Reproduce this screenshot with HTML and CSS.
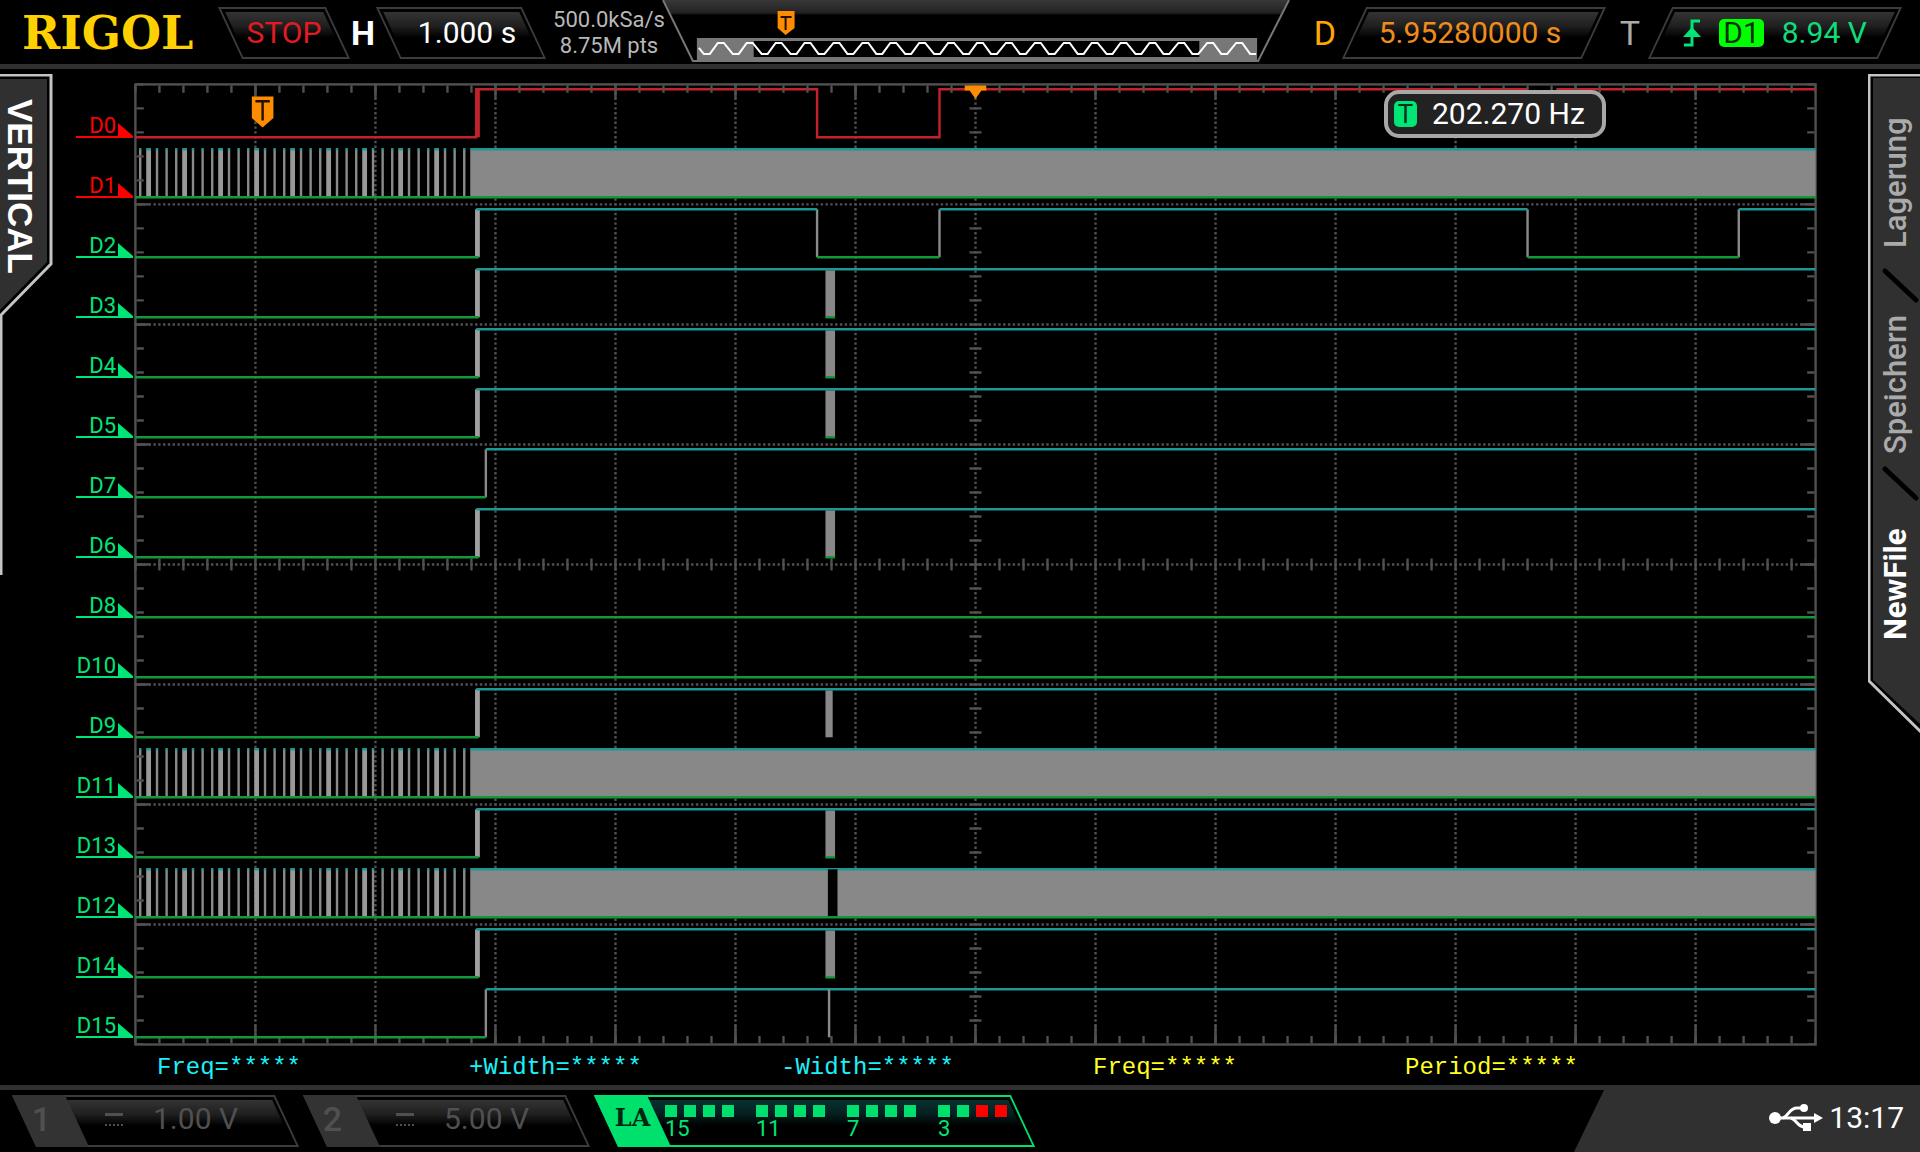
FILE: index.html
```html
<!DOCTYPE html>
<html lang="en">
<head>
<meta charset="utf-8">
<title>RIGOL Logic Analyzer</title>
<link rel="stylesheet" href="styles.css">
</head>
<body>
<header class="topbar">
  <div class="cluster">
    <div class="logo">RIGOL</div>
    <div class="chip chip-run">STOP</div>
    <div class="letter letter-h">H</div>
    <div class="chip chip-time">1.000 s</div>
    <div class="sampling"><span>500.0kSa/s</span><span>8.75M pts</span></div>
  </div>
  <svg class="memory" viewBox="0 0 634 64" aria-hidden="true">
    <defs>
      <linearGradient id="fade" x1="0" y1="0" x2="0" y2="1"><stop offset="0" stop-color="#383838"/><stop offset="0.85" stop-color="#222"/><stop offset="1" stop-color="#000"/></linearGradient>
    </defs>
    <path d="M3 0H631L624 15H10Z" fill="url(#fade)"/>
    <path d="M3 0L33 61H600L631 0" fill="none" stroke="#777" stroke-width="2"/>
    <path d="M37 38H599V61H37Z" fill="#777"/>
    <path d="M94 41H541V57H94Z" fill="#000"/>
    <path id="wave" fill="none" stroke="#fff" stroke-width="2"/>
    <path d="M118 11H135V28L126 35L118 28Z" fill="#ff8c00"/>
    <path d="M121 17H132M126 17V30" stroke="#201000" stroke-width="2"/>
  </svg>
  <div class="cluster">
    <div class="letter letter-d">D</div>
    <div class="chip chip-delay lean-left">5.95280000 s</div>
    <div class="letter letter-t">T</div>
    <div class="chip chip-trigger lean-left">
      <svg width="18" height="28" viewBox="0 0 18 28" aria-hidden="true"><path d="M1 26H9V2H17" fill="none" stroke="#00e676" stroke-width="3"/><path d="M9 8L18 18H0Z" fill="#00e676"/></svg>
      <span class="source">D1</span><span>8.94 V</span>
    </div>
  </div>
</header>

<main class="workspace">
  <aside class="tab-left">
    <svg viewBox="0 0 54 502" width="54" height="502" aria-hidden="true">
      <path d="M0 5H47V188L0 236Z" fill="#303030"/>
      <path d="M0 1H51V190L1 241V501" fill="none" stroke="#c4c4c4" stroke-width="3"/>
    </svg>
    <span class="tab-left-title">VERTICAL</span>
  </aside>

  <ul class="channels">
    <li class="off">D0</li><li class="off">D1</li><li>D2</li><li>D3</li>
    <li>D4</li><li>D5</li><li>D7</li><li>D6</li>
    <li>D8</li><li>D10</li><li>D9</li><li>D11</li>
    <li>D13</li><li>D12</li><li>D14</li><li>D15</li>
  </ul>

  <section class="plot" aria-label="Digital waveforms">
    <svg class="graticule" viewBox="-1 -1 702 402">
      <defs>
        <g id="enable">
          <path class="edge wide" d="M142.5 2V22"/>
          <path class="low" d="M0 22H143"/>
          <path class="high" d="M142 2H700"/>
        </g>
        <g id="late">
          <path class="edge" d="M146 2V22"/>
          <path class="low" d="M0 22H146"/>
          <path class="high" d="M146 2H700"/>
        </g>
        <g id="burst">
          <path class="solid" d="M287.5 2.500H291.5V22H287.5Z"/>
          <path class="low" d="M287.5 22H291.5"/>
        </g>
        <g id="clock">
          <path class="edge" id="bars-thin" d="M8.5 12H139"/>
          <path class="edge" id="bars-wide" d="M4.5 12H139"/>
          <path class="edge" d="M2 2V22"/>
          <path class="solid" d="M139.5 2H700V22H139.5Z"/>
          <path class="high dash-thin" d="M8.5 2H139"/>
          <path class="high dash-wide" d="M4.5 2H139"/>
          <path class="high" d="M1.5 2H2.5M139.5 2H700"/>
          <path class="low" d="M0 22H700"/>
        </g>
      </defs>
      <path class="dots" d="M50 -.5V400M100 -.5V400M150 -.5V400M200 -.5V400M250 -.5V400M300 -.5V400M350 -.5V400M400 -.5V400M450 -.5V400M500 -.5V400M550 -.5V400M600 -.5V400M650 -.5V400"/>
      <path class="dots" d="M-.5 50H700M-.5 100H700M-.5 150H700M-.5 200H700M-.5 250H700M-.5 300H700M-.5 350H700"/>
      <path class="ticks axis" d="M-.5 200H700M350 -.5V400"/>
      <path class="ticks" d="M-.5 398H700M698 -.5V400"/>
      <path class="frame" d="M50 392V400M100 392V400M150 392V400M200 392V400M250 392V400M300 392V400M350 392V400M400 392V400M450 392V400M500 392V400M550 392V400M600 392V400M650 392V400M0 50H6M0 100H6M0 150H6M0 200H6M0 250H6M0 300H6M0 350H6M694 50H700M694 100H700M694 150H700M694 200H700M694 250H700M694 300H700M694 350H700"/>
      <rect class="frame" width="700" height="400"/>

      <path class="trace-off" d="M0 22H142V2H284V22H335V2H580M592 2H700M143 2V22"/>
      <use href="#clock" y="25"/>
      <g transform="translate(0 50)">
        <path class="edge" d="M284 2V22M335 2V22M580 2V22M668 2V22"/>
        <path class="edge wide" d="M142.5 2V22"/>
        <path class="high" d="M142 2H284M335 2H580M668 2H700"/>
        <path class="low" d="M0 22H143M284 22H335M580 22H668"/>
      </g>
      <use href="#enable" y="75"/><use href="#burst" y="75"/>
      <use href="#enable" y="100"/><use href="#burst" y="100"/>
      <use href="#enable" y="125"/><use href="#burst" y="125"/>
      <use href="#late" y="150"/>
      <use href="#enable" y="175"/><use href="#burst" y="175"/>
      <path class="low" d="M0 222H700M0 247H700"/>
      <use href="#enable" y="250"/><path class="solid" d="M287.5 252.5H290.5V272H287.5Z"/>
      <use href="#clock" y="275"/>
      <use href="#enable" y="300"/><use href="#burst" y="300"/>
      <use href="#clock" y="325"/><path d="M288.5 327H292.5V346.5H288.5Z"/>
      <use href="#enable" y="350"/><use href="#burst" y="350"/>
      <use href="#late" y="375"/><path class="edge" d="M289 377V397"/>

      <path class="ticks" d="M-.5 2H700M2 -.5V400"/>
      <path class="frame" d="M50 0V6M100 0V6M150 0V6M200 0V6M250 0V6M300 0V6M350 0V6M400 0V6M450 0V6M500 0V6M550 0V6M600 0V6M650 0V6"/>
      <path class="marker" d="M345.5 .5H354.5V2.5H352.5L350 6L347.5 2.5H345.5Z"/>
      <path class="marker" d="M48.5 5H57.5V14L53 18L48.5 14Z"/>
      <path d="M50 7H56M53 7V15" stroke="#201000"/>
    </svg>
    <output class="counter"><span class="counter-tag">T</span>202.270 Hz</output>
  </section>

  <nav class="tab-right">
    <svg class="tab-right-shape" viewBox="0 0 52 660" width="52" height="660" aria-hidden="true">
      <path d="M5 4H52V650L5 606Z" fill="#303030"/>
      <path d="M52 1H1V607L53 658" fill="none" stroke="#c4c4c4" stroke-width="3"/>
      <path d="M17 197L48 226M17 395L48 424" stroke="#000" stroke-width="5" stroke-linecap="round"/>
    </svg>
    <button type="button" class="menu-item">Lagerung</button>
    <button type="button" class="menu-item">Speichern</button>
    <button type="button" class="menu-item current">NewFile</button>
  </nav>
</main>

<section class="measurements">
  <span>Freq=*****</span><span>+Width=*****</span><span>-Width=*****</span>
  <span class="second">Freq=*****</span><span class="second">Period=*****</span>
</section>

<footer class="bottombar">
  <button type="button" class="channel-chip"><span class="number">1</span><span class="coupling"></span><span>1.00 V</span></button>
  <button type="button" class="channel-chip"><span class="number">2</span><span class="coupling"></span><span>5.00 V</span></button>
  <button type="button" class="channel-chip logic">
    <span class="number">LA</span>
    <span class="bank"><span class="leds"><i></i><i></i><i></i><i></i></span>15</span>
    <span class="bank"><span class="leds"><i></i><i></i><i></i><i></i></span>11</span>
    <span class="bank"><span class="leds"><i></i><i></i><i></i><i></i></span>7</span>
    <span class="bank"><span class="leds"><i></i><i></i><i class="red"></i><i class="red"></i></span>3</span>
  </button>
  <div class="status">
    <svg width="54" height="28" viewBox="0 0 54 28" aria-label="USB"><g fill="none" stroke="#fff" stroke-width="3"><path d="M6 14H46"/><path d="M14 14C20 12 20 4 28 4H34"/><path d="M22 14C28 16 28 23 36 23H40"/></g><g fill="#fff"><circle cx="6" cy="14" r="6"/><path d="M45 9L54 14L45 19Z"/><circle cx="35" cy="4" r="4"/><path d="M34 19H42V27H34Z"/></g></svg>
    <time>13:17</time>
  </div>
</footer>
<script src="wave.js"></script>
</body>
</html>
```
FILE: wave.js
```js
// Draws the memory overview wave: alternating flat troughs and crests.
const first = 47;
const last = 595;
const count = 39;
const points = [];
for (let i = 0; i < count; i++) {
  const x = Math.round(first + (last - first) * i / (count - 1));
  const y = i % 2 ? 43 : 54;
  points.push(`${x - 3} ${y}`, `${x + 3} ${y}`);
}
document.getElementById("wave").setAttribute("d", "M39 48L" + points.join("L"));
```
FILE: styles.css
```css
* { box-sizing: border-box; }

body {
  margin: 0;
  min-height: 100vh;
  display: flex;
  flex-direction: column;
  background: #000;
  color: #fff;
  font: 30px/36px Roboto, "Liberation Sans", sans-serif;
}

button {
  margin: 0;
  padding: 0;
  border: 0;
  background: none;
  color: inherit;
  font: inherit;
}

.topbar {
  display: flex;
  justify-content: space-between;
  height: 69px;
  border-bottom: 5px solid #303030;
}

.cluster { display: flex; align-items: center; height: 66px; }

.logo {
  width: 208px;
  padding-left: 22px;
  color: #ffd100;
  font: bold 46px/60px "DejaVu Serif", serif;
}

.chip, .channel-chip {
  position: relative;
  z-index: 0;
  display: flex;
  align-items: center;
  height: 52px;
}

.chip::before, .channel-chip::before {
  content: "";
  position: absolute;
  inset: 0;
  z-index: -1;
  border: 2px solid #3c3c3c;
  box-shadow: inset 0 0 0 3px #000;
  background: linear-gradient(#383838, #202020 35%, #000 60%);
  transform: skewX(25deg);
}

.chip.lean-left::before { transform: skewX(-25deg); }

.chip { justify-content: center; }
.chip-run { width: 108px; margin-left: 22px; color: #e01b22; }
.chip-time { width: 146px; padding-left: 12px; }
.chip-delay { width: 240px; padding-right: 8px; color: #ef8c1c; }
.chip-trigger { width: 230px; gap: 18px; color: #10dc7c; }

.letter { font-size: 34px; text-align: center; }
.letter-h { width: 50px; font-weight: bold; }
.letter-d { width: 58px; color: #ffa800; }
.letter-t { width: 66px; padding-left: 6px; color: #aaa; }

.source {
  padding: 0 4px;
  border-radius: 5px;
  background: #0f0;
  color: #003000;
  line-height: 28px;
}

.sampling {
  display: flex;
  flex-direction: column;
  align-items: center;
  width: 110px;
  margin-left: 20px;
  color: #b8b8b8;
  font-size: 22px;
  line-height: 26px;
  white-space: nowrap;
}

.memory { width: 634px; height: 64px; margin: 0 4px 0 -4px; }
.topbar .cluster:last-child { padding-right: 30px; }

.workspace {
  display: grid;
  grid-template-columns: 54px 57px 1fr 52px;
  align-items: start;
  padding-top: 5px;
}

.tab-left { position: relative; }
.tab-left svg, .tab-right-shape, .graticule { display: block; }

.tab-left-title {
  position: absolute;
  top: 25px;
  left: 0;
  font: bold 35px/40px "Liberation Sans", sans-serif;
  writing-mode: vertical-rl;
}

.channels {
  display: grid;
  grid-template-rows: repeat(16, 1fr);
  align-self: stretch;
  width: 57px;
  margin: 8px 0 0 22px;
  padding: 2px 0 3px;
  list-style: none;
  color: #00e676;
  font-size: 22px;
  line-height: 24px;
}

.channels li {
  position: relative;
  align-self: start;
  height: 54px;
  padding: 30px 17px 0 0;
  border-bottom: 2px solid;
  text-align: right;
}

.channels li::after {
  content: "";
  position: absolute;
  right: 0;
  bottom: 0;
  width: 15px;
  height: 13px;
  background: currentColor;
  clip-path: polygon(0 0, 100% 100%, 0 100%);
}

.channels .off { color: #f00; }

.plot { position: relative; margin: 8px 50px 0 22px; }
.graticule { width: 100%; height: auto; }

.dots, .ticks, .frame { fill: none; stroke: #505050; }
.dots { stroke-dasharray: 1 1; }
.ticks { stroke-width: 3; stroke-dasharray: 1 9; }
.ticks.axis { stroke-width: 5; }
.high, .low, .edge, .trace-off { fill: none; }
.high { stroke: #1b9894; }
.low { stroke: #14993a; }
.edge { stroke: #8a8a8a; }
.edge.wide { stroke: #a0a0a0; stroke-width: 2; }
.solid { fill: #888; }
.trace-off { stroke: #c4222a; }
.marker { fill: #ff8c00; }
#bars-thin, #bars-wide { stroke-width: 20; }
#bars-wide { stroke: #999; }
#bars-wide, .dash-wide { stroke-dasharray: 2 13; }
#bars-thin, .dash-thin { stroke-dasharray: 1 3 1 3 1 6; }

.counter {
  position: absolute;
  top: 8px;
  right: 212px;
  display: flex;
  align-items: center;
  gap: 15px;
  width: 222px;
  height: 48px;
  padding-left: 6px;
  border: 4px solid #a8a8a8;
  border-radius: 15px;
  background: #222;
}

.counter-tag {
  width: 23px;
  border-radius: 5px;
  background: #00e676;
  color: #003018;
  font-size: 26px;
  line-height: 26px;
  text-align: center;
}

.tab-right {
  position: relative;
  display: flex;
  flex-direction: column;
  align-items: center;
  height: 660px;
  padding: 42px 0 0 4px;
}

.tab-right-shape { position: absolute; top: 0; left: 0; }

.menu-item {
  position: relative;
  height: 134px;
  margin-bottom: 63px;
  color: #aaa;
  font-size: 31px;
  font-weight: 500;
  writing-mode: vertical-rl;
  transform: rotate(180deg);
}

.menu-item + .menu-item { height: 144px; margin-bottom: 73px; }
.menu-item.current { height: 110px; margin: 0; color: #fff; font-weight: bold; }

.measurements {
  display: grid;
  grid-template-columns: repeat(5, 312fr) 203fr;
  padding: 4px 0 0 157px;
  color: #1cf0f8;
  font: 24px/34px "Liberation Mono", monospace;
}

.measurements .second { color: #ff2; }

.bottombar {
  display: flex;
  align-items: center;
  gap: 28px;
  margin-top: auto;
  height: 67px;
  padding-left: 24px;
  border-top: 5px solid #303030;
}

.channel-chip { width: 263px; color: #505050; }

.channel-chip .number {
  position: relative;
  flex: none;
  width: 53px;
  height: 52px;
  padding-right: 18px;
  font: 500 34px/48px Roboto, sans-serif;
}

.channel-chip .number::before {
  content: "";
  position: absolute;
  inset: 0;
  z-index: -1;
  background: #333;
  transform: skewX(25deg);
}

.channel-chip > span:last-child { padding-bottom: 4px; }

.coupling {
  width: 18px;
  height: 13px;
  margin: 0 30px 4px 28px;
  border-top: 3px solid;
  border-bottom: 2px dotted;
}

.channel-chip.logic { width: 417px; color: #00e676; }
.logic::before { border-color: #00e06c; background: linear-gradient(#083434, #052020 35%, #000 60%); }
.channel-chip.logic .number { padding: 0; color: #002810; font: bold 28px/46px "DejaVu Serif", serif; font-size: 24px; }
.channel-chip.logic .number::before { background: #00e06c; }

.channel-chip .bank {
  flex: none;
  width: 91px;
  padding: 4px 0 0;
  font-size: 22px;
  line-height: 24px;
  text-align: left;
}
.channel-chip.logic .bank:last-child { padding-bottom: 0; }
.logic .number + .bank { margin-left: 6px; }

.leds { display: flex; gap: 7px; }
.leds i { width: 12px; height: 12px; background: #00e06c; }
.leds .red { background: #f00; }

.status {
  position: relative;
  z-index: 0;
  display: flex;
  align-items: center;
  gap: 6px;
  width: 346px;
  height: 62px;
  margin-left: auto;
  padding: 0 16px 6px 0;
  justify-content: flex-end;
  background: #303030;
  clip-path: polygon(30px 0, 100% 0, 100% 100%, 0 100%);
}
```
